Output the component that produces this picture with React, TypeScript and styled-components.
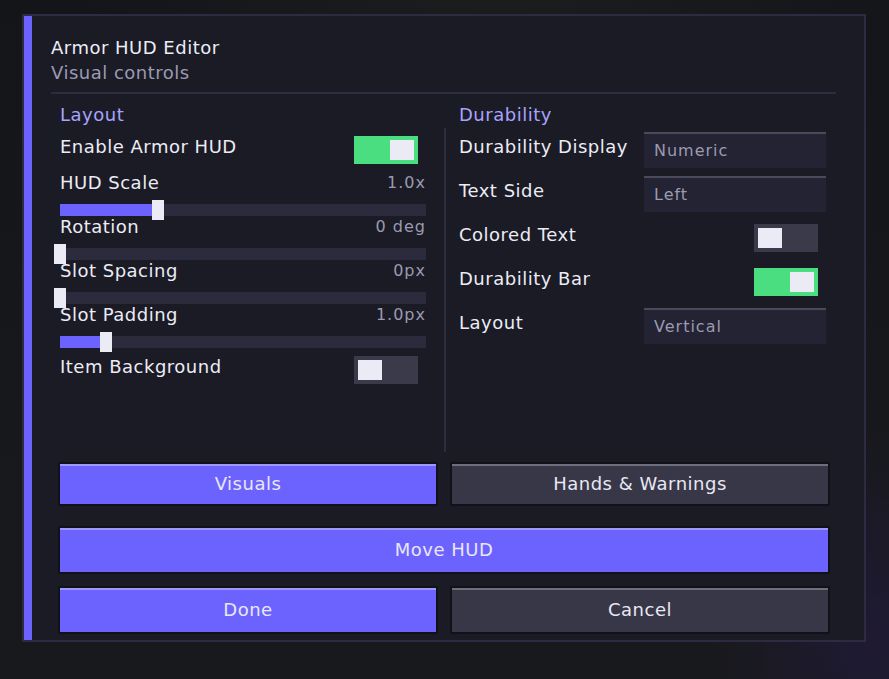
import React from "react";
import styled, { createGlobalStyle } from "styled-components";

const GlobalStyle = createGlobalStyle`
  html, body { margin: 0; padding: 0; }
  body {
    width: 889px;
    height: 679px;
    overflow: hidden;
    font-family: "DejaVu Sans", "Liberation Sans", sans-serif;
    background:
      radial-gradient(ellipse 160px 220px at 870px 640px, #1f1a33 0%, rgba(31,26,51,0) 100%),
      radial-gradient(ellipse 420px 60px at 500px 0px, #1b1d1d 0%, rgba(27,29,29,0) 100%),
      linear-gradient(180deg, #141519 0%, #17181b 60%, #18191c 100%);
  }
`;

const Page = styled.div`
  padding: 14px 0 0 22px;
  height: 679px;
  box-sizing: border-box;
`;

const Panel = styled.div`
  width: 844px;
  height: 628px;
  box-sizing: border-box;
  border: 2px solid #2d2b42;
  background: #1b1b26;
  display: flex;
`;

const Accent = styled.div`
  width: 8px;
  flex: none;
  background: #6c63ff;
`;

const Content = styled.div`
  flex: 1;
  padding: 20px 28px 0 19px;
  display: flex;
  flex-direction: column;
`;

const Title = styled.div`
  font-size: 18px;
  line-height: 22px;
  letter-spacing: 0.5px;
  color: #ededf7;
  margin-top: 1px;
`;

const Subtitle = styled.div`
  font-size: 18px;
  line-height: 22px;
  letter-spacing: 0.5px;
  color: #9c9ab0;
  margin-top: 3px;
`;

const HDivider = styled.div`
  height: 2px;
  background: #2d2b40;
  margin-top: 8px;
`;

const Columns = styled.div`
  display: grid;
  grid-template-columns: 366px max-content 367px;
  justify-content: start;
  height: 348px;
  margin: 10px 0 0 9px;
`;

const VDivider = styled.div`
  width: 2px;
  margin: 24px 13px 0 18px;
  background: #2d2b40;
`;

const Column = styled.div`
  display: flex;
  flex-direction: column;
`;

const SectionTitle = styled.div`
  font-size: 18px;
  line-height: 22px;
  letter-spacing: 0.5px;
  color: #a8a3ff;
  margin-bottom: 2px;
`;

const Row = styled.div`
  height: 44px;
  display: flex;
  align-items: center;
  justify-content: space-between;
`;

const Label = styled.span`
  font-size: 18px;
  line-height: 20px;
  letter-spacing: 0.5px;
  color: #ececf5;
  padding-bottom: 6px;
  white-space: nowrap;
`;

const Toggle = styled.div<{ $on: boolean }>`
  width: 64px;
  height: 28px;
  box-sizing: border-box;
  padding: 4px;
  margin-right: 8px;
  display: flex;
  justify-content: ${(p) => (p.$on ? "flex-end" : "flex-start")};
  background: ${(p) => (p.$on ? "#4ade80" : "#3a3a4b")};
`;

const Knob = styled.div`
  width: 24px;
  height: 20px;
  background: #ebebf5;
`;

const SliderBlock = styled.div`
  height: 44px;
  box-sizing: border-box;
  padding-top: 1px;
`;

const SliderHead = styled.div`
  height: 20px;
  display: flex;
  align-items: center;
  justify-content: space-between;
`;

const SliderLabel = styled.span`
  font-size: 18px;
  line-height: 20px;
  letter-spacing: 0.5px;
  color: #ececf5;
`;

const Value = styled.span`
  font-size: 16px;
  line-height: 20px;
  letter-spacing: 1px;
  color: #9c9ab0;
`;

const Track = styled.div`
  position: relative;
  height: 12px;
  margin-top: 11px;
  background: #2c2b3d;
`;

const Fill = styled.div`
  height: 100%;
  background: #6c63ff;
`;

const Thumb = styled.div`
  position: absolute;
  top: -4px;
  width: 12px;
  height: 20px;
  background: #ebebf5;
`;

const Select = styled.div`
  width: 182px;
  height: 36px;
  box-sizing: border-box;
  border-top: 2px solid #4a4a5c;
  background: #232333;
  padding: 0 0 2px 10px;
  display: flex;
  align-items: center;
  font-size: 16px;
  letter-spacing: 1px;
  color: #9c9ab0;
`;

const Buttons = styled.div`
  margin: 10px 6px 0 7px;
  display: flex;
  flex-direction: column;
`;

const ButtonRow = styled.div<{ $gap: number; $cols: number }>`
  display: grid;
  grid-template-columns: repeat(${(p) => p.$cols}, 1fr);
  column-gap: 12px;
  margin-top: ${(p) => p.$gap}px;
`;

const Button = styled.button<{ $primary?: boolean; $tall?: boolean }>`
  height: ${(p) => (p.$tall ? 48 : 44)}px;
  width: 100%;
  box-sizing: border-box;
  border: 2px solid #111118;
  padding: 0 0 1px;
  margin: 0;
  background: ${(p) => (p.$primary ? "#6c63ff" : "#383747")};
  box-shadow: inset 0 2px 0 ${(p) => (p.$primary ? "#9e98ff" : "#6f6e7c")};
  color: #e8e8f4;
  font-family: inherit;
  font-size: 18px;
  letter-spacing: 0.5px;
  cursor: pointer;
`;

const TRACK_W = 366;

type SliderProps = { label: string; value: string; frac: number };

const Slider: React.FC<SliderProps> = ({ label, value, frac }) => {
  const pos = frac * TRACK_W;
  return (
    <SliderBlock>
      <SliderHead>
        <SliderLabel>{label}</SliderLabel>
        <Value>{value}</Value>
      </SliderHead>
      <Track>
        <Fill style={{ width: Math.max(0, pos - 6) }} />
        <Thumb style={{ left: pos - 6 }} />
      </Track>
    </SliderBlock>
  );
};

const ToggleRow: React.FC<{ label: string; on: boolean }> = ({ label, on }) => (
  <Row>
    <Label>{label}</Label>
    <Toggle $on={on}>
      <Knob />
    </Toggle>
  </Row>
);

const SelectRow: React.FC<{ label: string; value: string }> = ({ label, value }) => (
  <Row>
    <Label>{label}</Label>
    <Select>{value}</Select>
  </Row>
);

export default function App() {
  return (
    <>
      <GlobalStyle />
      <Page>
        <Panel>
          <Accent />
          <Content>
            <Title>Armor HUD Editor</Title>
            <Subtitle>Visual controls</Subtitle>
            <HDivider />
            <Columns>
              <Column>
                <SectionTitle>Layout</SectionTitle>
                <ToggleRow label="Enable Armor HUD" on />
                <Slider label="HUD Scale" value="1.0x" frac={98 / TRACK_W} />
                <Slider label="Rotation" value="0 deg" frac={0} />
                <Slider label="Slot Spacing" value="0px" frac={0} />
                <Slider label="Slot Padding" value="1.0px" frac={46 / TRACK_W} />
                <ToggleRow label="Item Background" on={false} />
              </Column>
              <VDivider />
              <Column>
                <SectionTitle>Durability</SectionTitle>
                <SelectRow label="Durability Display" value="Numeric" />
                <SelectRow label="Text Side" value="Left" />
                <ToggleRow label="Colored Text" on={false} />
                <ToggleRow label="Durability Bar" on />
                <SelectRow label="Layout" value="Vertical" />
              </Column>
            </Columns>
            <Buttons>
              <ButtonRow $gap={0} $cols={2}>
                <Button $primary>Visuals</Button>
                <Button>Hands &amp; Warnings</Button>
              </ButtonRow>
              <ButtonRow $gap={20} $cols={1}>
                <Button $primary $tall>Move HUD</Button>
              </ButtonRow>
              <ButtonRow $gap={12} $cols={2}>
                <Button $primary $tall>Done</Button>
                <Button $tall>Cancel</Button>
              </ButtonRow>
            </Buttons>
          </Content>
        </Panel>
      </Page>
    </>
  );
}
